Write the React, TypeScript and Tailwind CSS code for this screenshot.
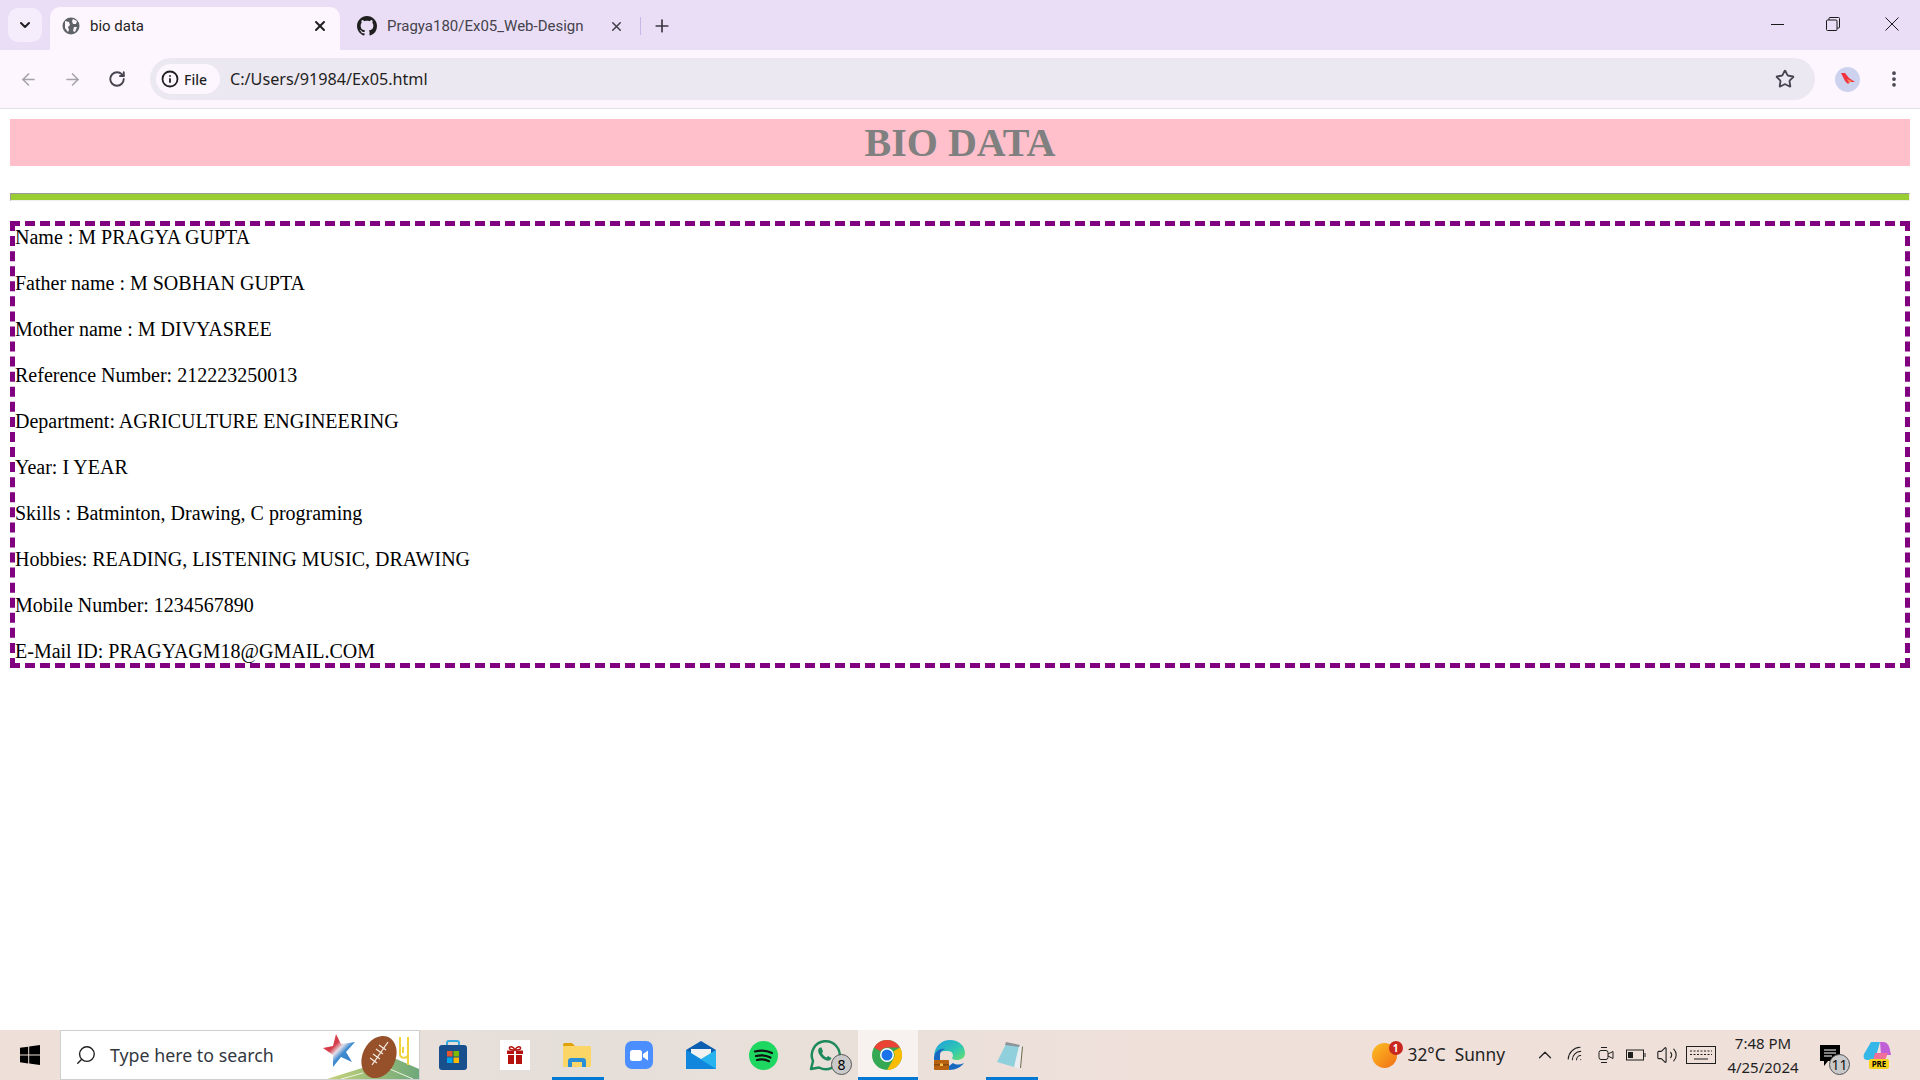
import React from 'react';
import { ArrowLeft, ArrowRight, RotateCw, Star, X, Plus, ChevronDown, ChevronUp, EllipsisVertical, Search, Info, Volume2, Wifi } from 'lucide-react';

const details = [
  'Name : M PRAGYA GUPTA',
  'Father name : M SOBHAN GUPTA',
  'Mother name : M DIVYASREE',
  'Reference Number: 212223250013',
  'Department: AGRICULTURE ENGINEERING',
  'Year: I YEAR',
  'Skills : Batminton, Drawing, C programing',
  'Hobbies: READING, LISTENING MUSIC, DRAWING',
  'Mobile Number: 1234567890',
  'E-Mail ID: PRAGYAGM18@GMAIL.COM',
];

const Globe = () => (
  <svg width="18" height="18" viewBox="0 0 18 18" className="shrink-0">
    <circle cx="9" cy="9" r="8.5" fill="#5f6368" />
    <path d="M3 4l4 1 1 3-2 2 1 3-1 2-3-4zM11 2l4 2-1 3-3 0-1-3zM12 10l3 0-2 5-2-1z" fill="#fdf6fe" />
  </svg>
);

const GitHub = () => (
  <svg width="20" height="20" viewBox="0 0 16 16" fill="#1f1f1f" className="shrink-0">
    <path d="M8 0C3.58 0 0 3.58 0 8c0 3.54 2.29 6.53 5.47 7.59.4.07.55-.17.55-.38 0-.19-.01-.82-.01-1.49-2.01.37-2.53-.49-2.69-.94-.09-.23-.48-.94-.82-1.13-.28-.15-.68-.52-.01-.53.63-.01 1.08.58 1.23.82.72 1.21 1.87.87 2.33.66.07-.52.28-.87.51-1.07-1.78-.2-3.64-.89-3.64-3.95 0-.87.31-1.59.82-2.15-.08-.2-.36-1.02.08-2.12 0 0 .67-.21 2.2.82.64-.18 1.32-.27 2-.27s1.36.09 2 .27c1.53-1.04 2.2-.82 2.2-.82.44 1.1.16 1.92.08 2.12.51.56.82 1.27.82 2.15 0 3.07-1.87 3.75-3.65 3.95.29.25.54.73.54 1.48 0 1.07-.01 1.93-.01 2.2 0 .21.15.46.55.38A8.01 8.01 0 0016 8c0-4.42-3.58-8-8-8z" />
  </svg>
);

const TabBar = () => (
  <div className="h-[50px] bg-[#e9def5] flex items-end pl-[8px] text-[15px] text-[#1f1f1f] font-['Roboto',sans-serif]">
    <div className="w-[34px] h-[34px] mb-[8px] rounded-[10px] bg-[#f5edfb] flex items-center justify-center">
      <ChevronDown size={16} strokeWidth={3} />
    </div>
    <div className="w-[290px] h-[43px] ml-[8px] rounded-t-[10px] bg-[#fdf6fe] flex items-center pl-[12px] pr-[12px] pb-[5px]">
      <Globe />
      <span className="ml-[10px] flex-1">bio data</span>
      <X size={16} strokeWidth={3} />
    </div>
    <div className="h-[43px] shrink-0 flex items-center pl-[17px] pb-[5px] text-[#45424c]">
      <GitHub />
      <span className="ml-[10px] w-[222px] whitespace-nowrap">Pragya180/Ex05_Web-Design</span>
      <X size={15} strokeWidth={2.5} className="text-[#45424c]" />
      <div className="ml-[16px] w-[1px] h-[18px] bg-[#c6b8e6]" />
      <Plus size={20} strokeWidth={2} className="ml-[11px] text-[#3a3740]" />
    </div>
    <div className="flex-1" />
    <div className="flex items-center h-[50px] pb-[2px] text-[#1a1a1a]">
      <div className="w-[13px] h-[1px] bg-[#1a1a1a] mr-[42px]" />
      <svg width="14" height="14" viewBox="0 0 14 14" fill="none" stroke="#1a1a1a" className="mr-[45px]">
        <rect x="0.5" y="3" width="10.5" height="10.5" rx="1" />
        <path d="M3 3V1.5a1 1 0 011-1h8.5a1 1 0 011 1V10a1 1 0 01-1 1H11" />
      </svg>
      <svg width="14" height="14" viewBox="0 0 14 14" stroke="#1a1a1a" className="mr-[21px]">
        <path d="M0.5 0.5l13 13M13.5 0.5l-13 13" />
      </svg>
    </div>
  </div>
);

const Toolbar = () => (
  <div className="h-[59px] bg-[#fdf6fe] border-b border-[#e3dfe6] flex items-center pl-[19px] text-[#47444f]">
    <ArrowLeft size={19} strokeWidth={2} className="text-[#a5a2a9]" />
    <ArrowRight size={19} strokeWidth={2} className="ml-[25px] text-[#a5a2a9]" />
    <RotateCw size={18} strokeWidth={2.5} className="ml-[26px] text-[#47444f]" />
    <div className="ml-[24px] w-[1665px] h-[42px] rounded-full bg-[#ece8f1] flex items-center pl-[6px] pr-[20px]">
      <div className="w-[64px] h-[30px] rounded-full bg-[#fdf6fe] flex items-center pl-[5px] gap-[5px] text-[14px] font-medium text-[#1f1f1f]">
        <Info size={18} strokeWidth={2.4} className="text-[#1f1f1f]" />
        <span>File</span>
      </div>
      <span className="ml-[10px] flex-1 text-[16.2px] text-[#1f1f1f]">C:/Users/91984/Ex05.html</span>
      <Star size={20} strokeWidth={2.2} className="text-[#47444f]" />
    </div>
    <div className="ml-[20px] w-[25px] h-[25px] rounded-full bg-[#cdd3ee] flex items-center justify-center">
      <svg width="15" height="14" viewBox="0 0 15 14">
        <path d="M1 1l4 0 4 5 6 4-5 0-2 2-3-3z" fill="#ef3340" />
        <path d="M7 7l5 2-3 2z" fill="#f78a5a" />
      </svg>
    </div>
    <EllipsisVertical size={20} strokeWidth={2.5} className="ml-[24px] text-[#47444f]" />
  </div>
);

const StoreIcon = () => (
  <svg width="30" height="30" viewBox="0 0 30 30">
    <path d="M9 5V3a2 2 0 012-2h8a2 2 0 012 2v2" fill="none" stroke="#35a8e0" strokeWidth="2" />
    <rect x="1" y="5" width="28" height="25" rx="3" fill="#17508c" />
    <rect x="9" y="11" width="5.5" height="5.5" fill="#e8542c" />
    <rect x="15.5" y="11" width="5.5" height="5.5" fill="#7fba00" />
    <rect x="9" y="17.5" width="5.5" height="5.5" fill="#00a4ef" />
    <rect x="15.5" y="17.5" width="5.5" height="5.5" fill="#ffb900" />
  </svg>
);

const GiftIcon = () => (
  <div className="w-[30px] h-[30px] bg-white flex items-center justify-center">
    <svg width="16" height="18" viewBox="0 0 16 18" fill="#b3120f">
      <path d="M8 4C6 0 2 0 2.500 2.500 3 4 6 4 8 4c2 0 5 0 5.500-1.500C14 0 10 0 8 4z" fill="none" stroke="#b3120f" strokeWidth="1.500" />
      <rect x="0" y="4.500" width="7" height="3.500" />
      <rect x="9" y="4.500" width="7" height="3.500" />
      <rect x="1" y="9" width="6" height="9" />
      <rect x="9" y="9" width="6" height="9" />
    </svg>
  </div>
);

const FolderIcon = () => (
  <svg width="28" height="24" viewBox="0 0 28 24">
    <path d="M0 2a2 2 0 012-2h7l3 3h-12z" fill="#e0a106" />
    <rect x="0" y="3" width="28" height="21" rx="1" fill="#fbd667" />
    <path d="M5 24v-6a3 3 0 013-3h12a3 3 0 013 3v6h-4v-5h-10v5z" fill="#2b8fd8" />
  </svg>
);

const ZoomIcon = () => (
  <div className="w-[28px] h-[28px] rounded-[7px] bg-[#4b8eff] flex items-center justify-center">
    <svg width="18" height="11" viewBox="0 0 18 11" fill="#fff">
      <rect x="0" y="0" width="12" height="11" rx="2.500" />
      <path d="M13 4l5-3.500v10L13 7z" />
    </svg>
  </div>
);

const MailIcon = () => (
  <svg width="30" height="28" viewBox="0 0 30 28">
    <path d="M0 9L15 0l15 9v3H0z" fill="#0b5eb0" />
    <path d="M5 8h20v6l-10 5-10-5z" fill="#f2f2f2" />
    <path d="M0 9l15 9 15-9v19H0z" fill="#27b3ee" />
    <path d="M0 28V9l30 19z" fill="#1087dc" />
  </svg>
);

const SpotifyIcon = () => (
  <svg width="29" height="29" viewBox="0 0 29 29" fill="none">
    <circle cx="14.500" cy="14.500" r="14.500" fill="#1ed760" />
    <path d="M6 10.500c5.500-1.500 12-1 17 1.500M7 15c5-1.200 10-.8 14.500 1.500M8 19c4-1 8-.7 12 1.200" stroke="#111" strokeWidth="2.200" strokeLinecap="round" />
  </svg>
);

const WhatsAppIcon = () => (
  <svg width="32" height="32" viewBox="0 0 32 32" fill="none">
    <path d="M2 30l2-8A14 14 0 1110 28.500z" stroke="#1d8a5b" strokeWidth="2.500" strokeLinejoin="round" />
    <path d="M11 8.500c-2 1-2.500 3.500-1 6.500 2 3.500 4.500 5.500 7.500 6.500 2.500.5 4.500-.5 5-2.500l-3.500-2-1.500 1.500c-2-.8-3.500-2.500-4.500-4.500L14 12.500 12.500 8.500z" fill="#1d8a5b" />
  </svg>
);

const ChromeIcon = () => (
  <svg width="30" height="30" viewBox="0 0 30 30" className="relative">
    <circle cx="15" cy="15" r="15" fill="#34a853" />
    <path d="M15 0a15 15 0 0113 7.500H15a7.500 7.500 0 00-6.500 3.750L2 7.500A15 15 0 0115 0z" fill="#ea4335" />
    <path d="M28 7.500A15 15 0 0115 30l6.500-11.250a7.500 7.500 0 000-7.500z" fill="#fbbc04" />
    <circle cx="15" cy="15" r="7" fill="#fff" />
    <circle cx="15" cy="15" r="5.500" fill="#1a73e8" />
  </svg>
);

const EdgeIcon = () => (
  <svg width="31" height="30" viewBox="0 0 31 30">
    <defs>
      <linearGradient id="edgeTop" x1="0" y1="0" x2="1" y2="1">
        <stop offset="0" stopColor="#1d9fe0" />
        <stop offset="0.6" stopColor="#30c8b0" />
        <stop offset="1" stopColor="#6ae06a" />
      </linearGradient>
    </defs>
    <path d="M0 17C0 6 8 0 16 0c9 0 15 6 15 13 0 5-4 7-8 7-3 0-5-1-5-2 2-2 1-7-4-7-7 0-14 1-14 6z" fill="url(#edgeTop)" />
    <path d="M0 17c1-6 6-9 11-8-3 1-5 3-5 7v4H0z" fill="#1668c0" />
    <path d="M15 30c7 0 12-3 15-7-4 2-8 2-11 0l-4 3z" fill="#1668c0" />
    <rect x="0" y="20" width="15" height="10" rx="1" fill="#b8620f" />
    <rect x="0" y="24" width="15" height="1.500" fill="#8a4a0c" />
    <rect x="6" y="23.500" width="3" height="2.500" fill="#f2c14e" />
  </svg>
);

const NotepadIcon = () => (
  <svg width="28" height="28" viewBox="0 0 28 28">
    <path d="M9 2l17 3-2 23-10-3z" fill="#e9edf0" />
    <path d="M25 5l1 1-2 21-1 0z" fill="#7a6a4a" />
    <path d="M9 3l13 2-5 21L0 21z" fill="#8fd0dc" />
    <path d="M9 1l14 3-1 2L8 4z" fill="#8d9499" />
  </svg>
);

const TaskIcon = ({ children, active, line }: { children: React.ReactNode; active?: boolean; line?: boolean }) => (
  <div className="relative w-[62px] h-[50px] flex items-center justify-center">
    {active && <div className="absolute inset-y-0 left-[2px] right-0 bg-[#f7f2ef]" />}
    {children}
    {line && <div className={`absolute bottom-0 h-[3px] bg-[#0078d4] ${active ? 'left-[2px] right-0' : 'left-[6px] right-[4px]'}`} />}
  </div>
);

const SearchArt = () => (
  <svg width="100" height="48" viewBox="0 0 100 48" className="shrink-0">
    <defs>
      <linearGradient id="field" x1="0" y1="0" x2="1" y2="0">
        <stop offset="0" stopColor="#c4d27a" />
        <stop offset="1" stopColor="#6fa87a" />
      </linearGradient>
      <linearGradient id="star" x1="0" y1="0" x2="1" y2="1">
        <stop offset="0" stopColor="#d63c4a" />
        <stop offset="0.35" stopColor="#d63c4a" />
        <stop offset="0.48" stopColor="#e4dfe8" />
        <stop offset="0.6" stopColor="#3f8bd0" />
        <stop offset="1" stopColor="#2c74c0" />
      </linearGradient>
    </defs>
    <path d="M8 48L75 27 100 38V48z" fill="url(#field)" />
    <path d="M22 48l22-6M64 35l30 13" stroke="#eef4e2" strokeWidth="1" />
    <path d="M17 3l5 10 14-2-9 10 6 10-11-5-8 10 0-12-10-7 10-2z" fill="url(#star)" />
    <ellipse cx="60" cy="26" rx="16.500" ry="22" transform="rotate(25 60 26)" fill="#96502a" />
    <path d="M69 11L53 34M60 14l7 5M57 18l7 5M54 23l7 5M51 27l7 5" stroke="#f5ebe0" strokeWidth="1.300" />
    <path d="M81 6v17c0 5 8 5 8 0M89 6v28M84 16v6" stroke="#eed33e" strokeWidth="2" fill="none" />
  </svg>
);

const Tray = () => (
  <div className="flex items-center h-[50px] text-[#1f1f1f]">
    <div className="relative w-[25px] h-[25px] rounded-full bg-gradient-to-br from-[#fbbf24] to-[#ef6c14]">
      <div className="absolute -top-[2px] -right-[6px] w-[14px] h-[14px] rounded-full bg-[#c8281e] text-white text-[10px] font-bold leading-[14px] text-center">1</div>
    </div>
    <span className="ml-[11px] text-[17.3px] whitespace-pre">32°C  Sunny</span>
    <ChevronUp size={22} strokeWidth={1.300} className="ml-[29px]" />
    <Wifi size={20} strokeWidth={1.300} className="ml-[10px] -rotate-45" />
    <svg width="16" height="20" viewBox="0 0 16 20" fill="none" stroke="#1f1f1f" className="ml-[12px]">
      <rect x="1" y="5.500" width="9" height="9" rx="2" />
      <path d="M10 9l5-2.500v7L10 11M3 2.500h6M3 17.500h6" />
    </svg>
    <svg width="20" height="12" viewBox="0 0 20 12" fill="none" stroke="#1f1f1f" className="ml-[12px]">
      <rect x="0.500" y="1" width="17" height="10" />
      <rect x="2" y="3" width="5" height="6" fill="#1f1f1f" stroke="none" />
      <path d="M19 4v4" />
    </svg>
    <Volume2 size={22} strokeWidth={1.200} className="ml-[10px]" />
    <svg width="30" height="18" viewBox="0 0 30 18" fill="none" stroke="#1f1f1f" className="ml-[8px]">
      <rect x="0.500" y="0.500" width="29" height="17" />
      <path d="M4 5h22M4 8.500h22" strokeDasharray="2 1.500" />
      <path d="M8 13h14" />
    </svg>
    <div className="w-[94px] text-center text-[15px] leading-[24px]">
      <div className="whitespace-nowrap">7:48 PM</div>
      <div className="whitespace-nowrap">4/25/2024</div>
    </div>
    <div className="relative ml-[10px] w-[20px] h-[20px]">
      <svg width="20" height="22" viewBox="0 0 20 22" fill="#000">
        <path d="M0 0h20v16H8l-4 5v-5H0z" />
        <path d="M4 5h12M4 8h12M4 11h8" stroke="#fff" strokeWidth="1" />
      </svg>
      <div className="absolute top-[9px] left-[9px] w-[21px] h-[21px] rounded-full bg-[#c9c9c9] border border-[#555] text-[14px] leading-[19px] text-center text-[#111]">11</div>
    </div>
    <div className="relative ml-[23px] w-[28px] h-[28px]">
      <svg width="28" height="24" viewBox="0 0 28 24">
        <path d="M8 1h9l-5 18H4C1 19 0 16 1 13z" fill="#35b8e8" />
        <path d="M17 1h3c4 0 6 3 7 8l1 5H18z" fill="#c15fd8" />
        <path d="M12 12h13l-3 7c-1 3-3 4-6 4h-7z" fill="#f0709a" />
      </svg>
      <div className="absolute bottom-0 left-[6px] w-[20px] h-[10px] rounded-[2px] bg-[#f7d21e] text-[8px] leading-[10px] font-bold text-center text-black">PRE</div>
    </div>
  </div>
);

const Taskbar = () => (
  <div className="h-[50px] flex bg-gradient-to-r from-[#efdfd9] via-[#e5dfd9] via-30% to-[#efe0da] to-60% font-['Noto_Sans',sans-serif]">
    <div className="w-[60px] flex items-center justify-center">
      <svg width="20" height="20" viewBox="0 0 20 20" fill="#000">
        <path d="M0 2.800l8.200-1.100v7.900H0zM9.200 1.500L20 0v9.600H9.200zM0 10.500h8.200v7.900L0 17.200zM9.200 10.500H20V20L9.200 18.500z" />
      </svg>
    </div>
    <div className="w-[360px] bg-white border border-[#cfcfcf] flex items-center pl-[14px] overflow-hidden">
      <Search size={22} strokeWidth={1.500} className="text-[#1f1f1f] -scale-x-100" />
      <span className="ml-[13px] flex-1 text-[17.8px] text-[#33383f] whitespace-nowrap">Type here to search</span>
      <SearchArt />
    </div>
    <div className="w-[2px]" />
    <TaskIcon><StoreIcon /></TaskIcon>
    <TaskIcon><GiftIcon /></TaskIcon>
    <TaskIcon line><FolderIcon /></TaskIcon>
    <TaskIcon><ZoomIcon /></TaskIcon>
    <TaskIcon><MailIcon /></TaskIcon>
    <TaskIcon><SpotifyIcon /></TaskIcon>
    <TaskIcon>
      <WhatsAppIcon />
      <div className="absolute top-[24px] left-[37px] w-[21px] h-[21px] rounded-full bg-[#c9c9c9] border border-[#555] text-[14px] leading-[19px] text-center text-black">8</div>
    </TaskIcon>
    <TaskIcon active line><ChromeIcon /></TaskIcon>
    <TaskIcon><EdgeIcon /></TaskIcon>
    <TaskIcon line><NotepadIcon /></TaskIcon>
    <div className="flex-1" />
    <div className="pr-[29px]"><Tray /></div>
  </div>
);

export default function App() {
  return (
    <div className="h-screen w-[1920px] flex flex-col overflow-hidden bg-white">
      <div className="font-['Noto_Sans',sans-serif]">
        <TabBar />
        <Toolbar />
      </div>
      <main className="flex-1 px-[10px] pt-[10px] font-['Liberation_Serif',serif] text-[20px] leading-[23px] text-black">
        <h1 className="h-[47px] bg-[#ffc0cb] text-center text-[40px] leading-[48px] font-bold text-[#808080]">BIO DATA</h1>
        <div className="mt-[27px] h-[8px] bg-[#9acd32] border border-t-[#9a9a9a] border-l-[#9a9a9a] border-r-[#eeeeee] border-b-[#eeeeee]" />
        <div className="mt-[20px] border-[5px] border-dashed border-[#800080]">
          {details.map((line, i) => (
            <p key={line} className={i === 0 ? '' : 'mt-[23px]'}>{line}</p>
          ))}
        </div>
      </main>
      <Taskbar />
    </div>
  );
}
